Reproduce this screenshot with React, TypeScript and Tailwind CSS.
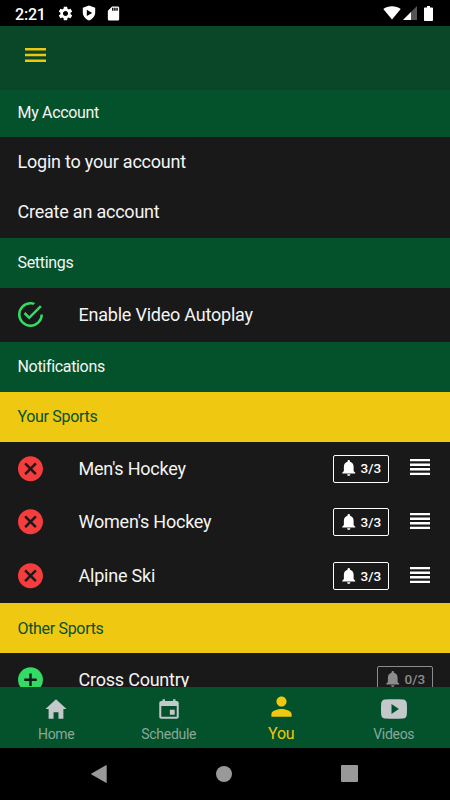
import type { ReactNode } from "react";
import {
  IoMdHome,
  IoMdCalendar,
  IoMdPerson,
  IoLogoYoutube,
} from "react-icons/io";
import { MdSettings, MdSdCard } from "react-icons/md";

const SPORTS = ["Men's Hockey", "Women's Hockey", "Alpine Ski"];

export default function App() {
  return (
    <div className="flex h-[800px] w-[450px] flex-col overflow-hidden bg-[#191919] font-['Roboto',sans-serif] text-[#f4f4f4]">
      <StatusBar />

      {/* App bar */}
      <header className="flex h-16 shrink-0 items-start bg-[#0a4628] pt-[22px] pl-[24.5px]">
        <svg viewBox="0 0 21 14" className="h-3.5 w-[21px] fill-[#eec80f]">
          <path d="M0 0h21v2.500H0zM0 5.750h21v2.500H0zM0 11.500h21V14H0z" />
        </svg>
      </header>

      {/* Scrollable list */}
      <main className="flex min-h-0 flex-1 flex-col overflow-hidden">
        <div className="flex h-[47px] shrink-0 items-center bg-[#03522b] pb-0.5 pl-[17.5px] text-base tracking-[-0.32px]">
          My Account
        </div>
        <div className="flex h-[101px] shrink-0 flex-col text-lg tracking-[-0.22px]">
          <p className="flex h-[50px] items-center pl-[17.5px]">Login to your account</p>
          <p className="flex h-[50px] items-center pl-[17.5px]">Create an account</p>
        </div>
        <Section title="Settings" />
        <Row label="Enable Video Autoplay" icon={<CheckIcon />} />
        <Section title="Notifications" />
        <SubSection title="Your Sports" />
        {SPORTS.map((name) => (
          <Row key={name} label={name} icon={<RemoveIcon />}>
            <Counter value="3/3" />
            <ReorderIcon />
          </Row>
        ))}
        <SubSection title="Other Sports" />
        <Row label="Cross Country" icon={<AddIcon />}>
          <Counter value="0/3" muted />
        </Row>
      </main>

      {/* Tabs */}
      <nav className="grid h-[61px] shrink-0 grid-cols-4 bg-[#03522b]">
        <Tab label="Home" icon={<IoMdHome className="size-[26px]" />} />
        <Tab label="Schedule" icon={<IoMdCalendar className="size-[26px]" />} />
        <Tab label="You" icon={<IoMdPerson className="size-[27px]" />} active />
        <Tab label="Videos" icon={<IoLogoYoutube className="size-[26px]" />} />
      </nav>

      {/* System buttons */}
      <footer className="flex h-[52px] shrink-0 items-center justify-between bg-black pr-[92.5px] pb-px pl-[91px]">
        <svg viewBox="0 0 16 18" className="h-[18px] w-4 fill-[#999]">
          <path d="M15.7.6v16.8a.5.5 0 0 1-.8.4L.5 9.5a.6.6 0 0 1 0-1L14.9.2a.5.5 0 0 1 .8.4z" />
        </svg>
        <div className="size-4 rounded-full bg-[#999]" />
        <div className="size-[17px] rounded-[1px] bg-[#999]" />
      </footer>
    </div>
  );
}

function StatusBar() {
  return (
    <div className="flex h-[26px] shrink-0 items-center justify-between bg-black pr-4 pl-[15px] text-white">
      <div className="flex items-center">
        <span className="w-[42px] pt-[3px] text-base font-medium tracking-[-0.2px]">2:21</span>
        <MdSettings className="size-[17px]" />
        <svg viewBox="0 0 14 16" className="ml-2 h-4 w-3.5 fill-white">
          <path
            fillRule="evenodd"
            d="M7 .4 13.2 2.8v4.7c0 3.6-2.6 6.6-6.2 8-3.6-1.4-6.2-4.4-6.2-8V2.8zM4.8 4.7v6.4L10.2 7.9z"
          />
        </svg>
        <MdSdCard className="ml-[8.5px] size-[17px]" />
      </div>
      <div className="flex items-center">
        <svg viewBox="0 0 18 14" className="h-3.5 w-[18px] fill-white">
          <path d="M9 13.5.3 3C2.8 1.2 5.8.2 9 .2s6.200 1 8.700 2.800z" />
        </svg>
        <svg viewBox="0 0 14 14" className="ml-0.5 size-3.5">
          <path d="M14 0v14H0z" fill="#555" />
          <path d="M8 6v8H0z" fill="#fff" />
        </svg>
        <svg viewBox="0 0 9 15" className="mr-px ml-[7px] h-[15px] w-[9px] fill-white">
          <path d="M3 0h3v1.500h2.200q.8 0 .8.8v11.900q0 .8-.8.8H.8q-.8 0-.8-.8V2.300q0-.8.8-.8H3z" />
        </svg>
      </div>
    </div>
  );
}

function Section({ title }: { title: string }) {
  return (
    <h2 className="flex h-[50px] shrink-0 items-center bg-[#03522b] pl-[17.5px] text-base tracking-[-0.32px]">
      {title}
    </h2>
  );
}

function SubSection({ title }: { title: string }) {
  return (
    <h3 className="flex h-[50px] shrink-0 items-center bg-[#efc811] pt-px pl-[17.5px] text-base tracking-[-0.32px] text-[#03522b]">
      {title}
    </h3>
  );
}

function Row(props: { label: string; icon: ReactNode; children?: ReactNode }) {
  return (
    <div className="flex h-[53.8px] shrink-0 items-center pr-[17px] pl-[15.5px]">
      {props.icon}
      <span className="ml-[33px] flex-1 text-lg tracking-[-0.22px]">{props.label}</span>
      {props.children}
    </div>
  );
}

function Counter({ value, muted }: { value: string; muted?: boolean }) {
  return (
    <div
      className={`flex h-7 w-14 items-center rounded-[2px] border pl-[5px] text-[13.5px] font-medium ${
        muted ? "border-[#8c8c8c] text-[#8c8c8c]" : "border-white text-white"
      }`}
    >
      <svg viewBox="0 0 24 24" className="mb-0.5 size-[19.5px] fill-current">
        <path d="M12 22c1.100 0 2-.9 2-2h-4c0 1.100.89 2 2 2zm6-6v-5c0-3.070-1.640-5.640-4.500-6.320V4c0-.83-.67-1.500-1.500-1.500s-1.500.67-1.500 1.500v.68C7.630 5.360 6 7.920 6 11v5l-2 2v1h16v-1l-2-2z" />
      </svg>
      <span className="mb-px ml-0.5">{value}</span>
    </div>
  );
}

function Tab(props: { label: string; icon: ReactNode; active?: boolean }) {
  return (
    <div
      className={`flex flex-col items-center ${
        props.active ? "pt-[6px] text-[#efc811]" : "pt-[9px] text-[#c3c8cb]"
      }`}
    >
      {props.icon}
      <span
        className={
          props.active
            ? "mt-1 text-base leading-5 tracking-[-0.25px]"
            : "mt-0.5 text-sm leading-5 tracking-[-0.3px] text-[#88a899]"
        }
      >
        {props.label}
      </span>
    </div>
  );
}

function CheckIcon() {
  return (
    <svg viewBox="0.4 0.4 24 24" className="size-[30px] fill-[#32db64]">
      <path d="M20,12A8,8 0 0,1 12,20A8,8 0 0,1 4,12A8,8 0 0,1 12,4C12.76,4 13.5,4.11 14.2,4.31L15.77,2.74C14.61,2.26 13.34,2 12,2A10,10 0 0,0 2,12A10,10 0 0,0 12,22A10,10 0 0,0 22,12H20M7.91,10.08L6.5,11.5L11,16L21,6L19.59,4.58L11,13.17L7.91,10.08Z" />
    </svg>
  );
}

function RemoveIcon() {
  return (
    <svg viewBox="0.4 0.2 24 24" className="size-[30px] fill-[#f53d3d]">
      <path d="M12,2C17.53,2 22,6.47 22,12C22,17.53 17.53,22 12,22C6.47,22 2,17.53 2,12C2,6.47 6.47,2 12,2M15.59,7L12,10.59L8.41,7L7,8.41L10.59,12L7,15.59L8.41,17L12,13.41L15.59,17L17,15.59L13.41,12L17,8.41L15.59,7Z" />
    </svg>
  );
}

function AddIcon() {
  return (
    <svg viewBox="0.4 0.2 24 24" className="size-[30px] fill-[#32db64]">
      <path d="M17,13H13V17H11V13H7V11H11V7H13V11H17M12,2A10,10 0 0,0 2,12A10,10 0 0,0 12,22A10,10 0 0,0 22,12A10,10 0 0,0 12,2Z" />
    </svg>
  );
}

function ReorderIcon() {
  return (
    <svg viewBox="0 0 20 16" className="mr-[3px] mb-[3px] ml-[21px] h-4 w-5 fill-white">
      <path d="M0 0h20v2.300H0zM0 4.600h20v2.300H0zM0 9.100h20v2.300H0zM0 13.700h20V16H0z" />
    </svg>
  );
}
